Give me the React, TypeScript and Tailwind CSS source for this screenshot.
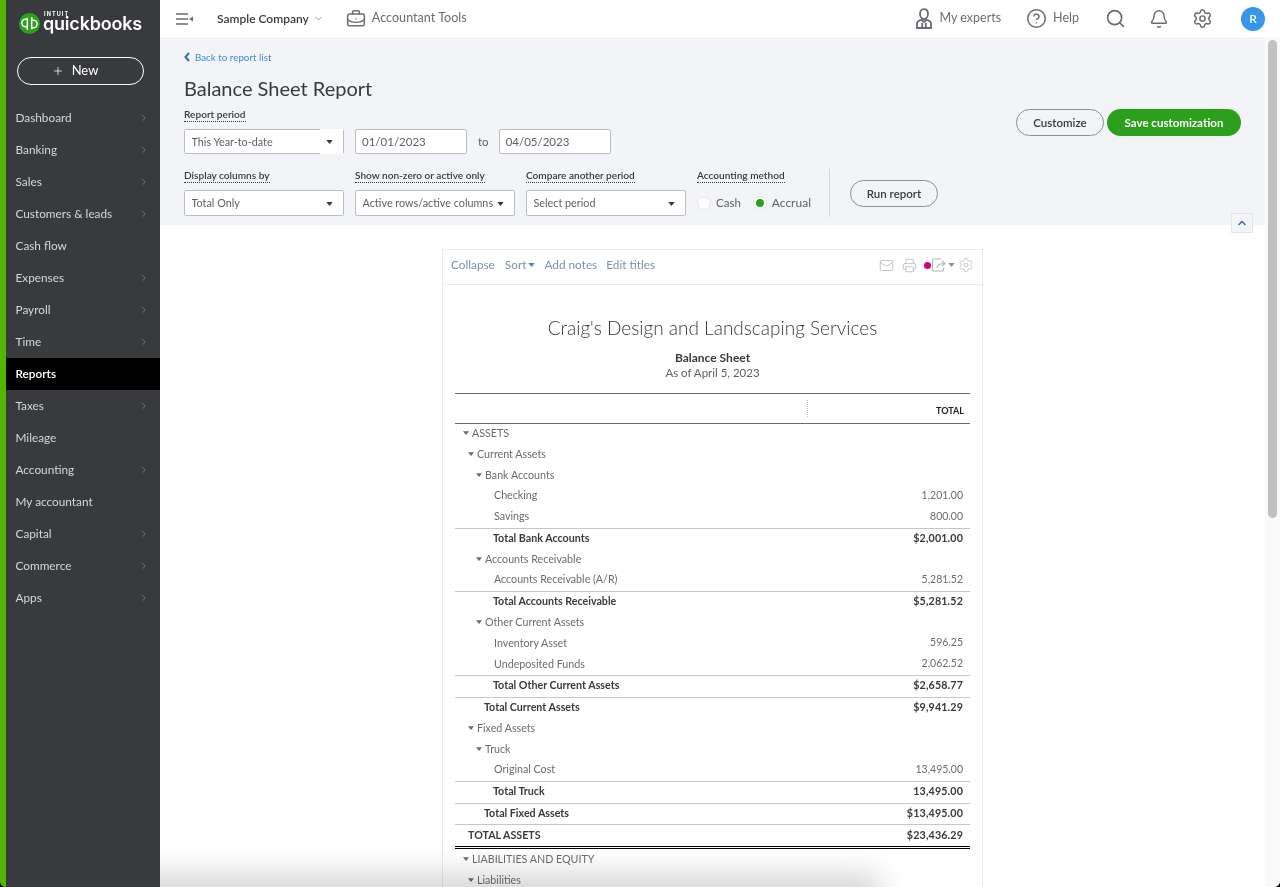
import { ChevronRight, ChevronDown, ChevronUp, Plus, BriefcaseBusiness, CircleHelp, Search, Bell, Settings, Mail, Printer } from 'lucide-react';

const font = "font-['Lato','Noto_Sans',sans-serif]";

const navItems = [
  { label: 'Dashboard', arrow: true },
  { label: 'Banking', arrow: true },
  { label: 'Sales', arrow: true },
  { label: 'Customers & leads', arrow: true },
  { label: 'Cash flow', arrow: false },
  { label: 'Expenses', arrow: true },
  { label: 'Payroll', arrow: true },
  { label: 'Time', arrow: true },
  { label: 'Reports', arrow: false, active: true },
  { label: 'Taxes', arrow: true },
  { label: 'Mileage', arrow: false },
  { label: 'Accounting', arrow: true },
  { label: 'My accountant', arrow: false },
  { label: 'Capital', arrow: true },
  { label: 'Commerce', arrow: true },
  { label: 'Apps', arrow: true },
];

type Row = {
  label: string;
  amount?: string;
  indent: number;
  h: number;
  caret?: boolean;
  bold?: boolean;
  line?: boolean;
  double?: boolean;
  tight?: boolean;
};

// heights are what keeps the rule lines on the reference's rows
const rows: Row[] = [
  { label: 'ASSETS', indent: 17, h: 20, caret: true },
  { label: 'Current Assets', indent: 22, h: 21, caret: true },
  { label: 'Bank Accounts', indent: 30, h: 21, caret: true },
  { label: 'Checking', amount: '1,201.00', indent: 39, h: 20 },
  { label: 'Savings', amount: '800.00', indent: 39, h: 22 },
  { label: 'Total Bank Accounts', amount: '$2,001.00', indent: 38, h: 21, bold: true, line: true },
  { label: 'Accounts Receivable', indent: 30, h: 21, caret: true },
  { label: 'Accounts Receivable (A/R)', amount: '5,281.52', indent: 39, h: 21, tight: true },
  { label: 'Total Accounts Receivable', amount: '$5,281.52', indent: 38, h: 21, bold: true, line: true },
  { label: 'Other Current Assets', indent: 30, h: 21, caret: true },
  { label: 'Inventory Asset', amount: '596.25', indent: 39, h: 21 },
  { label: 'Undeposited Funds', amount: '2,062.52', indent: 39, h: 21 },
  { label: 'Total Other Current Assets', amount: '$2,658.77', indent: 38, h: 22, bold: true, line: true },
  { label: 'Total Current Assets', amount: '$9,941.29', indent: 29, h: 21, bold: true, line: true },
  { label: 'Fixed Assets', indent: 22, h: 21, caret: true },
  { label: 'Truck', indent: 30, h: 21, caret: true },
  { label: 'Original Cost', amount: '13,495.00', indent: 39, h: 21, tight: true },
  { label: 'Total Truck', amount: '13,495.00', indent: 38, h: 22, bold: true, line: true },
  { label: 'Total Fixed Assets', amount: '$13,495.00', indent: 29, h: 21, bold: true, line: true },
  { label: 'TOTAL ASSETS', amount: '$23,436.29', indent: 13, h: 25, bold: true, line: true, double: true },
  { label: 'LIABILITIES AND EQUITY', indent: 17, h: 21, caret: true },
  { label: 'Liabilities', indent: 22, h: 21, caret: true },
];

function Caret({ className = '' }: { className?: string }) {
  return (
    <svg width="7" height="4" viewBox="0 0 8 5" className={className}>
      <path d="M0 0h8L4 5z" fill="currentColor" />
    </svg>
  );
}

function Label({ children }: { children: string }) {
  return (
    <div className="mb-[7px] h-[14px] w-fit border-b border-dotted border-[#393a3d] text-[10.1px] font-semibold leading-[13px] text-[#393a3d]">
      {children}
    </div>
  );
}

function SelectBox({ value, h = 'h-[26px]', patch = false }: { value: string; h?: string; patch?: boolean }) {
  return (
    <div className={`relative flex w-[160px] items-center justify-between rounded-[2px] border border-[#babec5] bg-white pl-[6.5px] pr-[10px] pt-[1px] text-[10.8px] text-[#5f6165] ${h}`}>
      <span className="truncate">{value}</span>
      {patch && <span className="absolute bottom-[-1px] right-0 top-[-1px] w-[23px] bg-white" />}
      <Caret className="relative shrink-0 text-[#393a3d]" />
    </div>
  );
}

function DateBox({ value }: { value: string }) {
  return (
    <div className="flex h-[25px] w-[112px] items-center rounded-[2px] border border-[#babec5] bg-white pl-[6px] text-[11.5px] text-[#5f6165]">
      {value}
    </div>
  );
}

function Sidebar() {
  return (
    <aside className="flex h-full w-[160px] shrink-0 flex-col border-l-[6px] border-[#53b700] bg-[#393a3d]">
      <div className="flex h-[46px] items-center pl-[13px]">
        <svg width="21" height="21" viewBox="0 0 22 22">
          <circle cx="11" cy="11" r="11" fill="#2ca01c" />
          <path d="M9 6.500H7a4 4 0 0 0 0 8h1.200M8.700 5v12.500M13 15.500h2a4 4 0 0 0 0-8h-1.200M13.300 4.500V17" fill="none" stroke="#fff" strokeWidth="1.6" />
        </svg>
        <div className="ml-[3px] -mt-[3px] flex flex-col font-['Inter',sans-serif] text-white">
          <div className="ml-[1px] h-[5px] text-[5.5px] font-bold leading-[5px] tracking-[1.1px]">INTUIT</div>
          <div className="h-[14px] text-[18px] font-semibold leading-[14px] tracking-[-0.2px]">quickbooks</div>
        </div>
      </div>
      <div className="ml-[11px] mt-[11px] flex h-[28px] w-[127px] items-center justify-center gap-[8px] rounded-full border border-white pr-[11px] text-[13px] text-white">
        <Plus size={12} strokeWidth={1.5} />
        New
      </div>
      <nav className="mt-[17px] flex flex-col">
        {navItems.map((item) => (
          <div
            key={item.label}
            className={`flex h-[32px] items-center justify-between pl-[9.5px] pr-[11px] text-[11.8px] ${item.active ? 'bg-black font-semibold text-white' : 'text-[#d4d7dc]'}`}
          >
            {item.label}
            {item.arrow && <ChevronRight size={10} strokeWidth={2} className="text-[#7c7e82]" />}
          </div>
        ))}
      </nav>
    </aside>
  );
}

function TopBar() {
  return (
    <header className="flex h-[37px] shrink-0 items-center bg-white pl-[16px] text-[#6b6c72]">
      <svg width="17" height="12" viewBox="0 0 17 12">
        <path d="M0 1h12M0 6h12M0 11h12" stroke="currentColor" strokeWidth="1.6" />
        <path d="M17 3.500v5L13 6z" fill="currentColor" />
      </svg>
      <div className="ml-[24px] flex items-center gap-[4px] text-[12px] font-semibold text-[#393a3d]">
        Sample Company
        <ChevronDown size={11} strokeWidth={1.5} className="text-[#6b6c72]" />
      </div>
      <BriefcaseBusiness size={20} strokeWidth={1.8} className="ml-[22px]" />
      <span className="ml-[6px] text-[12.6px]">Accountant Tools</span>
      <div className="ml-auto flex items-center pr-[15px]">
        <svg width="16" height="21" viewBox="0 0 16 21" fill="none" stroke="#6b6c72" strokeWidth="1.8">
          <path d="M8 1.200c2.600 0 4 2 4 4.600 0 2.700-1.700 5.200-4 5.200S4 8.500 4 5.800C4 3.200 5.400 1.200 8 1.200z" />
          <path d="M1 20v-4.500c0-2 2-3 4.500-3.700L8 14l2.500-2.200c2.500.7 4.500 1.700 4.500 3.700V20zM6.200 20v-5M9.800 20v-5" />
        </svg>
        <span className="ml-[8px] text-[12.5px]">My experts</span>
        <CircleHelp size={21} strokeWidth={1.7} className="ml-[25px]" />
        <span className="ml-[6px] text-[12.5px]">Help</span>
        <Search size={21} strokeWidth={1.9} className="ml-[26px]" />
        <Bell size={20} strokeWidth={1.7} className="ml-[23px]" />
        <Settings size={21} strokeWidth={1.7} className="ml-[23px]" />
        <div className="ml-[28px] flex h-[24px] w-[24px] items-center justify-center rounded-full bg-[#3795eb] text-[12px] font-semibold text-white">
          R
        </div>
      </div>
    </header>
  );
}

function ReportHeader() {
  return (
    <section className="relative h-[188px] shrink-0 bg-[#f3f4f8] pl-[24px] pt-[14px]">
      <div className="flex h-[12px] items-center gap-[5px] text-[9.8px] text-[#3f8dd3]">
        <svg width="6" height="10" viewBox="0 0 6 10" fill="none" stroke="#3869b5" strokeWidth="2">
          <path d="M5 1L1.500 5 5 9" />
        </svg>
        Back to report list
      </div>
      <h1 className="mt-[11px] h-[28px] text-[20px] font-normal leading-[28px] text-[#393a3d]">Balance Sheet Report</h1>
      <div className="mt-[6px]">
        <Label>Report period</Label>
        <div className="flex items-center">
          <SelectBox value="This Year-to-date" h="h-[25px]" patch />
          <div className="ml-[11px]"><DateBox value="01/01/2023" /></div>
          <span className="ml-[11px] mr-[10px] text-[11.500px] text-[#5f6165]">to</span>
          <DateBox value="04/05/2023" />
        </div>
      </div>
      <div className="mt-[15px] flex items-start">
        <div className="w-[171px]">
          <Label>Display columns by</Label>
          <SelectBox value="Total Only" />
        </div>
        <div className="w-[171px]">
          <Label>Show non-zero or active only</Label>
          <SelectBox value="Active rows/active columns" />
        </div>
        <div className="w-[171px]">
          <Label>Compare another period</Label>
          <SelectBox value="Select period" />
        </div>
        <div className="w-[132px]">
          <Label>Accounting method</Label>
          <div className="flex h-[26px] items-center text-[11.5px] text-[#5f6165]">
            <span className="h-[14px] w-[14px] rounded-full border border-[#e3e5e8] bg-white" />
            <span className="ml-[5px]">Cash</span>
            <span className="ml-[12px] flex h-[14px] w-[14px] items-center justify-center rounded-full border border-[#e3e5e8] bg-white">
              <span className="h-[8px] w-[8px] rounded-full bg-[#2ca01c]" />
            </span>
            <span className="ml-[5px] text-[12px]">Accrual</span>
          </div>
        </div>
        <div className="h-[48px] border-l border-[#d4d7dc]" />
        <div className="ml-[20px] mt-[11px] flex h-[27px] w-[88px] items-center justify-center rounded-full border border-[#8d9096] text-[11.5px] font-semibold text-[#393a3d]">
          Run report
        </div>
      </div>
      <div className="absolute right-[24px] top-[72px] flex gap-[3px]">
        <div className="flex h-[27px] w-[88px] items-center justify-center rounded-full border border-[#8d9096] text-[11.5px] font-semibold text-[#393a3d]">
          Customize
        </div>
        <div className="flex h-[27px] w-[134px] items-center justify-center rounded-full bg-[#2ca01c] text-[11.5px] font-bold text-white">
          Save customization
        </div>
      </div>
      <div className="absolute right-[12px] top-[176px] z-10 flex h-[20px] w-[22px] items-center justify-center border border-[#e3e5e8] bg-[#f3f4f8]">
        <ChevronUp size={12} strokeWidth={3} className="text-[#3869b5]" />
      </div>
    </section>
  );
}

function ReportRow({ row }: { row: Row }) {
  const pad = row.double ? 'pb-0' : row.bold || row.tight ? 'pb-[2px]' : 'pb-[1px]';
  return (
    <div
      className={`flex shrink-0 items-center justify-between pr-[7px] text-[10.7px] ${pad} ${row.bold ? 'font-bold text-[#393a3d]' : 'text-[#6b6c72]'} ${row.line ? 'border-t border-[#c5c7ca]' : ''} ${row.double ? 'border-b-[3px] border-b-black [border-bottom-style:double]' : ''}`}
      style={{ height: row.h, paddingLeft: row.indent }}
    >
      <span className="relative">
        {row.caret && <Caret className="absolute left-[-9.5px] top-[6px] w-[6px] text-[#6b6c72]" />}
        {row.label}
      </span>
      {row.amount && <span className={row.bold ? 'tracking-[0.15px]' : 'text-[10.5px]'}>{row.amount}</span>}
    </div>
  );
}

function ReportCard() {
  return (
    <div className="mx-auto mt-[24px] w-[541px] border-x border-t border-[#e3ebf3] bg-white">
      <div className="flex h-[35px] items-center border-b border-[#e3ebf3] px-[8px] pb-[4px] text-[11.8px] text-[#7a92ad]">
        <span>Collapse</span>
        <span className="ml-[10px] flex items-center gap-[2px]">Sort<Caret className="text-[#5f7fa5]" /></span>
        <span className="ml-[9px]">Add notes</span>
        <span className="ml-[9px]">Edit titles</span>
        <div className="ml-auto flex items-center text-[#b4b7bc]">
          <Mail size={15} strokeWidth={1.3} />
          <Printer size={15} strokeWidth={1.3} className="ml-[8px]" />
          <span className="ml-[7px] h-[7px] w-[7px] rounded-full bg-[#d4007f]" />
          <svg width="16" height="16" viewBox="0 0 16 16" fill="none" stroke="currentColor" strokeWidth="1.2">
            <path d="M10 2H3a1.500 1.500 0 0 0-1.500 1.500v9A1.500 1.500 0 0 0 3 14h8a1.500 1.500 0 0 0 1.500-1.500V11" />
            <path d="M6 11c.5-3 3-4.500 7-4.500M11 4l3 2.500L11 9" />
          </svg>
          <Caret className="ml-[1px] text-[#7a92ad]" />
          <Settings size={16} strokeWidth={1.1} className="ml-[3px]" />
        </div>
      </div>
      <div className="px-[12px]">
        <div className="flex h-[109px] flex-col items-center border-b border-[#6b6c72] pt-[31px]">
          <div className="text-[19px] font-light leading-[24px] text-[#393a3d]">Craig's Design and Landscaping Services</div>
          <div className="mt-[10px] text-[12px] font-bold leading-[16px] text-[#393a3d]">Balance Sheet</div>
          <div className="-mt-[1px] text-[11.5px] leading-[16px] text-[#5f6165]">As of April 5, 2023</div>
        </div>
        <div className="flex h-[30px] border-b border-[#6b6c72]">
          <div className="my-[6px] w-[353px] border-r border-dotted border-[#babec5]" />
          <div className="flex flex-1 items-center justify-end pr-[6px] pt-[4px] text-[9px] font-bold text-[#222]">TOTAL</div>
        </div>
        <div className="flex flex-col">
          {rows.map((row) => (
            <ReportRow key={row.label} row={row} />
          ))}
        </div>
      </div>
    </div>
  );
}

export default function App() {
  return (
    <div className="h-[887px] w-[1280px] bg-black">
      <div className={`flex h-full w-full overflow-hidden rounded-b-[6px] bg-white ${font}`}>
        <Sidebar />
        <div className="flex min-w-0 flex-1 flex-col">
          <TopBar />
          <div className="flex min-h-0 flex-1">
            <main className="relative min-w-0 flex-1 overflow-hidden">
              <ReportHeader />
              <ReportCard />
              {/* soft grey haze along the bottom edge */}
              <div className="pointer-events-none absolute bottom-[-10px] left-[-40px] h-[10px] w-[750px] rounded-full shadow-[0_0_30px_12px_rgba(0,0,0,0.18)] mix-blend-multiply" />
            </main>
            <div className="w-[15px] shrink-0 bg-[#fafafa] px-[3px] pt-[3px]">
              <div className="h-[478px] rounded-full bg-[#c1c1c1]" />
            </div>
          </div>
        </div>
      </div>
    </div>
  );
}
